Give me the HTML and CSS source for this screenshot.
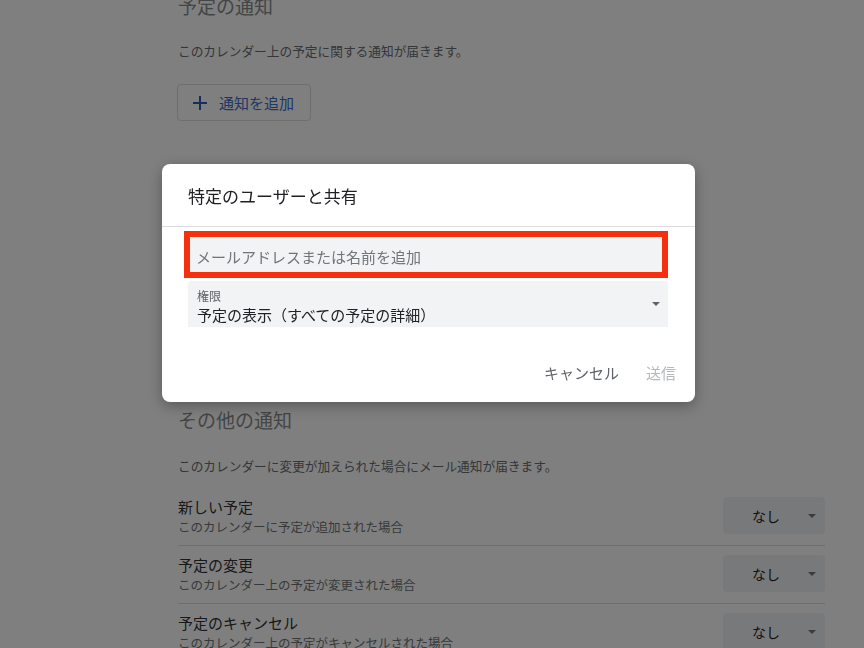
FILE: index.html
```html
<!DOCTYPE html>
<html lang="ja">

<head>
    <meta charset="UTF-8">
    <meta name="viewport" content="width=device-width, initial-scale=1.0">
    <title>カレンダーの設定</title>
    <link rel="stylesheet" href="styles.css">
</head>

<body>
    <main class="settings">
        <section class="block">
            <h2 class="block-title">予定の通知</h2>
            <p class="block-desc">このカレンダー上の予定に関する通知が届きます。</p>
            <button class="add-btn">
                <svg width="14" height="14" viewBox="0 0 14 14">
                    <path d="M7 0v14M0 7h14" stroke="#1a73e8" stroke-width="2" fill="none" />
                </svg>
                <span>通知を追加</span>
            </button>
        </section>

        <section class="block other">
            <h2 class="block-title">その他の通知</h2>
            <p class="block-desc">このカレンダーに変更が加えられた場合にメール通知が届きます。</p>

            <div class="row">
                <div class="row-text">
                    <div class="row-title">新しい予定</div>
                    <div class="row-sub">このカレンダーに予定が追加された場合</div>
                </div>
                <div class="dropdown"><span>なし</span><i class="caret"></i></div>
            </div>
            <div class="row">
                <div class="row-text">
                    <div class="row-title">予定の変更</div>
                    <div class="row-sub">このカレンダー上の予定が変更された場合</div>
                </div>
                <div class="dropdown"><span>なし</span><i class="caret"></i></div>
            </div>
            <div class="row">
                <div class="row-text">
                    <div class="row-title">予定のキャンセル</div>
                    <div class="row-sub">このカレンダー上の予定がキャンセルされた場合</div>
                </div>
                <div class="dropdown"><span>なし</span><i class="caret"></i></div>
            </div>
        </section>
    </main>

    <div class="scrim"></div>

    <div class="dialog">
        <div class="dialog-head">特定のユーザーと共有</div>
        <div class="dialog-body">
            <div class="email-input">メールアドレスまたは名前を追加</div>
            <div class="perm-select">
                <div class="perm-text">
                    <div class="perm-label">権限</div>
                    <div class="perm-value">予定の表示（すべての予定の詳細）</div>
                </div>
                <i class="caret"></i>
            </div>
        </div>
        <div class="dialog-foot">
            <button class="text-btn">キャンセル</button>
            <button class="text-btn disabled">送信</button>
        </div>
    </div>
</body>

</html>
```

FILE: styles.css
```css
body {
    margin: 0;
    font-family: "Noto Sans CJK JP", "Noto Sans", sans-serif;
    background-color: #fff;
    color: #202124;
    overflow: hidden;
}

.settings {
    margin: -8px 0 0 178px;
    width: 647px;
}

.block-title {
    margin: 0;
    font-size: 19px;
    line-height: 28px;
    font-weight: 400;
    color: #888a8c;
}

.block-desc {
    margin: 21px 0 0;
    font-size: 12.7px;
    line-height: 20px;
    color: #6a6d70;
}

.add-btn {
    margin-top: 23px;
    margin-left: -1px;
    height: 37px;
    padding: 0 16px 0 15px;
    display: flex;
    align-items: center;
    gap: 12px;
    background: #fff;
    border: 1px solid #dadce0;
    border-radius: 4px;
    font-family: inherit;
    font-size: 15px;
    color: #3d6fc4;
}

.add-btn svg path {
    stroke: #2b5fb8;
}

.other {
    margin-top: 285px;
}

.other .block-desc {
    margin-top: 22px;
    margin-bottom: 12px;
}

.row {
    height: 57px;
    display: flex;
    justify-content: space-between;
    align-items: flex-start;
    border-bottom: 1px solid #dadce0;
}

.row-text {
    padding-top: 9px;
}

.row-title {
    font-size: 15px;
    line-height: 20px;
    color: #333;
}

.row-sub {
    margin-top: 1px;
    font-size: 12.5px;
    line-height: 18px;
    color: #6f7275;
}

.dropdown {
    margin-top: 9px;
    width: 102px;
    height: 37px;
    box-sizing: border-box;
    padding: 0 9px 0 29px;
    display: flex;
    align-items: center;
    background-color: #f1f3f4;
    border-radius: 4px;
    font-size: 14px;
    color: #202124;
}

.caret {
    margin-left: auto;
    width: 0;
    height: 0;
    border-left: 4px solid transparent;
    border-right: 4px solid transparent;
    border-top: 4px solid #777;
}

.scrim {
    position: fixed;
    inset: 0;
    background-color: rgba(0, 0, 0, 0.5);
}

.dialog {
    position: fixed;
    left: 162px;
    top: 164px;
    width: 533px;
    height: 238px;
    background-color: #fff;
    border-radius: 8px;
    box-shadow: 0 4px 14px rgba(0, 0, 0, 0.3);
    overflow: hidden;
}

.dialog-head {
    height: 62px;
    padding: 0 26px;
    display: flex;
    align-items: center;
    border-bottom: 1px solid #dadce0;
    font-size: 17px;
    color: #202124;
}

.dialog-body {
    padding: 4px 27px 0 22px;
}

.email-input {
    height: 47px;
    box-sizing: border-box;
    padding: 4px 0 0 6px;
    display: flex;
    align-items: center;
    border: 6px solid #f5300e;
    background-color: #f1f3f4;
    font-size: 15px;
    color: #70757a;
}

.perm-select {
    margin: 3px 0 0 4px;
    height: 46px;
    box-sizing: border-box;
    padding: 0 8px 0 9px;
    display: flex;
    align-items: center;
    background-color: #f1f3f4;
    border-radius: 4px 4px 0 0;
}

.perm-text {
    padding-top: 6px;
}

.perm-label {
    font-size: 12px;
    line-height: 14px;
    color: #5f6368;
}

.perm-value {
    margin-top: 2px;
    font-size: 15px;
    line-height: 20px;
    color: #202124;
}

.perm-select .caret {
    border-top-color: #5f6368;
}

.dialog-foot {
    padding: 36px 19px 0;
    display: flex;
    justify-content: flex-end;
    gap: 27px;
}

.text-btn {
    padding: 0;
    border: none;
    background: none;
    font-family: inherit;
    font-size: 15px;
    line-height: 20px;
    color: #5f6368;
}

.text-btn.disabled {
    color: #b5b8bc;
}
```
